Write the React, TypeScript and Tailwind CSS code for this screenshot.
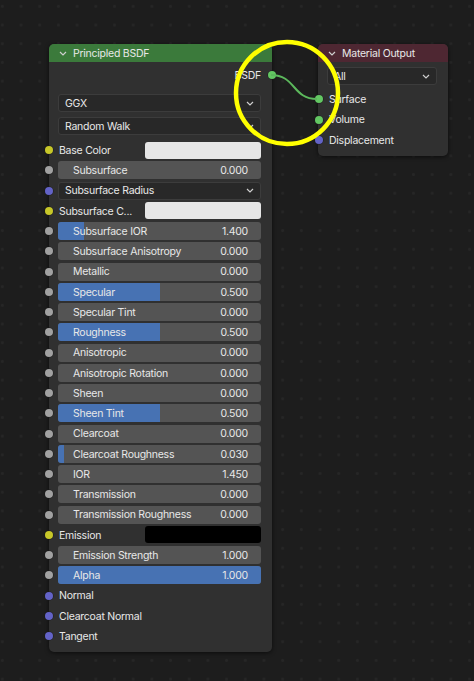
import React from "react";

const SOCK: Record<string, string> = {
  shader: "bg-[#63c763]",
  color: "bg-[#c7c729]",
  float: "bg-[#a1a1a1]",
  vector: "bg-[#6363c7]",
};

function Socket({ type, side = "left" }: { type: string; side?: "left" | "right" }) {
  return (
    <span
      className={`absolute top-1/2 -translate-y-1/2 w-[8px] h-[8px] rounded-full ring-[0.5px] ring-[#1a1a1a] ${SOCK[type]} ${
        side === "left" ? "left-[-13px]" : "right-[-15px]"
      }`}
    />
  );
}

function Chevron({ className = "" }: { className?: string }) {
  return (
    <svg width="8" height="5" viewBox="0 0 8 5" className={className}>
      <polyline points="1,1 4,4 7,1" fill="none" stroke="#cfcfcf" strokeWidth="1.2" />
    </svg>
  );
}

function Slider({ label, value, fill = 0 }: { label: string; value: string; fill?: number }) {
  return (
    <div className="relative h-[18px]">
      <Socket type="float" />
      <div className="relative h-full rounded-[3px] bg-[#545454] overflow-hidden flex items-center justify-between pl-[15px] pr-[13px] text-[#e8e8e8]">
        {fill > 0 && (
          <div className="absolute left-0 top-0 bottom-0 bg-[#4772b3]" style={{ width: `${fill * 100}%` }} />
        )}
        <span className="relative top-[1px]">{label}</span>
        <span className="relative top-[1px]">{value}</span>
      </div>
    </div>
  );
}

function Dropdown({ label, className = "" }: { label: string; className?: string }) {
  return (
    <div
      className={`h-[18px] rounded-[3px] bg-[#282828] border border-[#3c3c3c] flex items-center justify-between pl-[6px] pr-[6px] text-[#e8e8e8] ${className}`}
    >
      <span className="relative top-[1px]">{label}</span>
      <Chevron />
    </div>
  );
}

function ColorRow({ label, swatch }: { label: string; swatch: string }) {
  return (
    <div className="relative h-[18px] flex items-center">
      <Socket type="color" />
      <span className="relative top-[1px] w-[87px] pl-[1px] text-[#e8e8e8] whitespace-nowrap">{label}</span>
      <div className={`flex-1 h-[17px] rounded-[3px] ${swatch}`} />
    </div>
  );
}

function Plain({ label, type }: { label: string; type: string }) {
  return (
    <div className="relative h-[18px] flex items-center pl-[1px] text-[#e8e8e8]">
      <Socket type={type} />
      <span className="relative top-[1px]">{label}</span>
    </div>
  );
}

export default function App() {
  return (
    <div
      className="relative w-[474px] h-[681px] overflow-hidden bg-[#1d1d1d] bg-[radial-gradient(circle,#262626_1.3px,transparent_1.6px)] bg-size-[18.7px_18.7px] bg-position-[-7px_-3px] text-[10.5px] tracking-[-0.25px] leading-none"
      style={{ fontFamily: 'Inter, "DejaVu Sans", sans-serif' }}
    >
      {/* Principled BSDF node */}
      <div className="absolute left-[49px] top-[44px] w-[223px] h-[608px] rounded-[5px] bg-[#303030] shadow-[0_1px_4px_rgba(0,0,0,0.6)] flex flex-col">
        <div className="h-[18px] rounded-t-[5px] bg-[#3b7a3b] flex items-center pl-[10px] gap-[6px] text-[#e8e8e8]">
          <Chevron />
          <span className="relative top-[1px]">Principled BSDF</span>
        </div>
        <div className="flex flex-col pl-[9px] pr-[11px] pt-[4px]">
          <div className="relative h-[18px] flex items-center justify-end text-[#e8e8e8]">
            <span className="relative top-[1px]">BSDF</span>
            <Socket type="shader" side="right" />
          </div>
          <Dropdown label="GGX" className="mt-[10px]" />
          <Dropdown label="Random Walk" className="mt-[5px]" />
          <div className="flex flex-col gap-[2.25px] mt-[6px]">
            <ColorRow label="Base Color" swatch="bg-[#e6e6e6]" />
            <Slider label="Subsurface" value="0.000" />
            <div className="relative">
              <Socket type="vector" />
              <Dropdown label="Subsurface Radius" />
            </div>
            <ColorRow label="Subsurface C..." swatch="bg-[#e6e6e6]" />
            <Slider label="Subsurface IOR" value="1.400" fill={0.13} />
            <Slider label="Subsurface Anisotropy" value="0.000" />
            <Slider label="Metallic" value="0.000" />
            <Slider label="Specular" value="0.500" fill={0.5} />
            <Slider label="Specular Tint" value="0.000" />
            <Slider label="Roughness" value="0.500" fill={0.5} />
            <Slider label="Anisotropic" value="0.000" />
            <Slider label="Anisotropic Rotation" value="0.000" />
            <Slider label="Sheen" value="0.000" />
            <Slider label="Sheen Tint" value="0.500" fill={0.5} />
            <Slider label="Clearcoat" value="0.000" />
            <Slider label="Clearcoat Roughness" value="0.030" fill={0.03} />
            <Slider label="IOR" value="1.450" />
            <Slider label="Transmission" value="0.000" />
            <Slider label="Transmission Roughness" value="0.000" />
            <ColorRow label="Emission" swatch="bg-[#000000]" />
            <Slider label="Emission Strength" value="1.000" />
            <Slider label="Alpha" value="1.000" fill={1} />
            <Plain label="Normal" type="vector" />
            <Plain label="Clearcoat Normal" type="vector" />
            <Plain label="Tangent" type="vector" />
          </div>
        </div>
      </div>

      {/* Material Output node */}
      <div className="absolute left-[318px] top-[44px] w-[130px] h-[112px] rounded-[5px] bg-[#303030] shadow-[0_1px_4px_rgba(0,0,0,0.6)] flex flex-col">
        <div className="h-[18px] rounded-t-[5px] bg-[#4e2732] flex items-center pl-[10px] gap-[6px] text-[#e8e8e8]">
          <Chevron />
          <span className="relative top-[1px]">Material Output</span>
        </div>
        <div className="flex flex-col pl-[9px] pr-[11px]">
          <Dropdown label="All" className="mt-[5px]" />
          <div className="flex flex-col gap-[2.5px] mt-[5px] pl-[1px]">
            <Plain label="Surface" type="shader" />
            <Plain label="Volume" type="shader" />
            <Plain label="Displacement" type="vector" />
          </div>
        </div>
      </div>

      {/* link + annotation overlay */}
      <svg className="absolute left-0 top-0 pointer-events-none" width="474" height="681" viewBox="0 0 474 681">
        <path d="M271 75 C 296 75, 292 99, 317 99" fill="none" stroke="#5cb85c" strokeWidth="2" />
        <circle cx="287" cy="93" r="51" fill="none" stroke="#ffff00" strokeWidth="4.5" />
      </svg>
    </div>
  );
}
